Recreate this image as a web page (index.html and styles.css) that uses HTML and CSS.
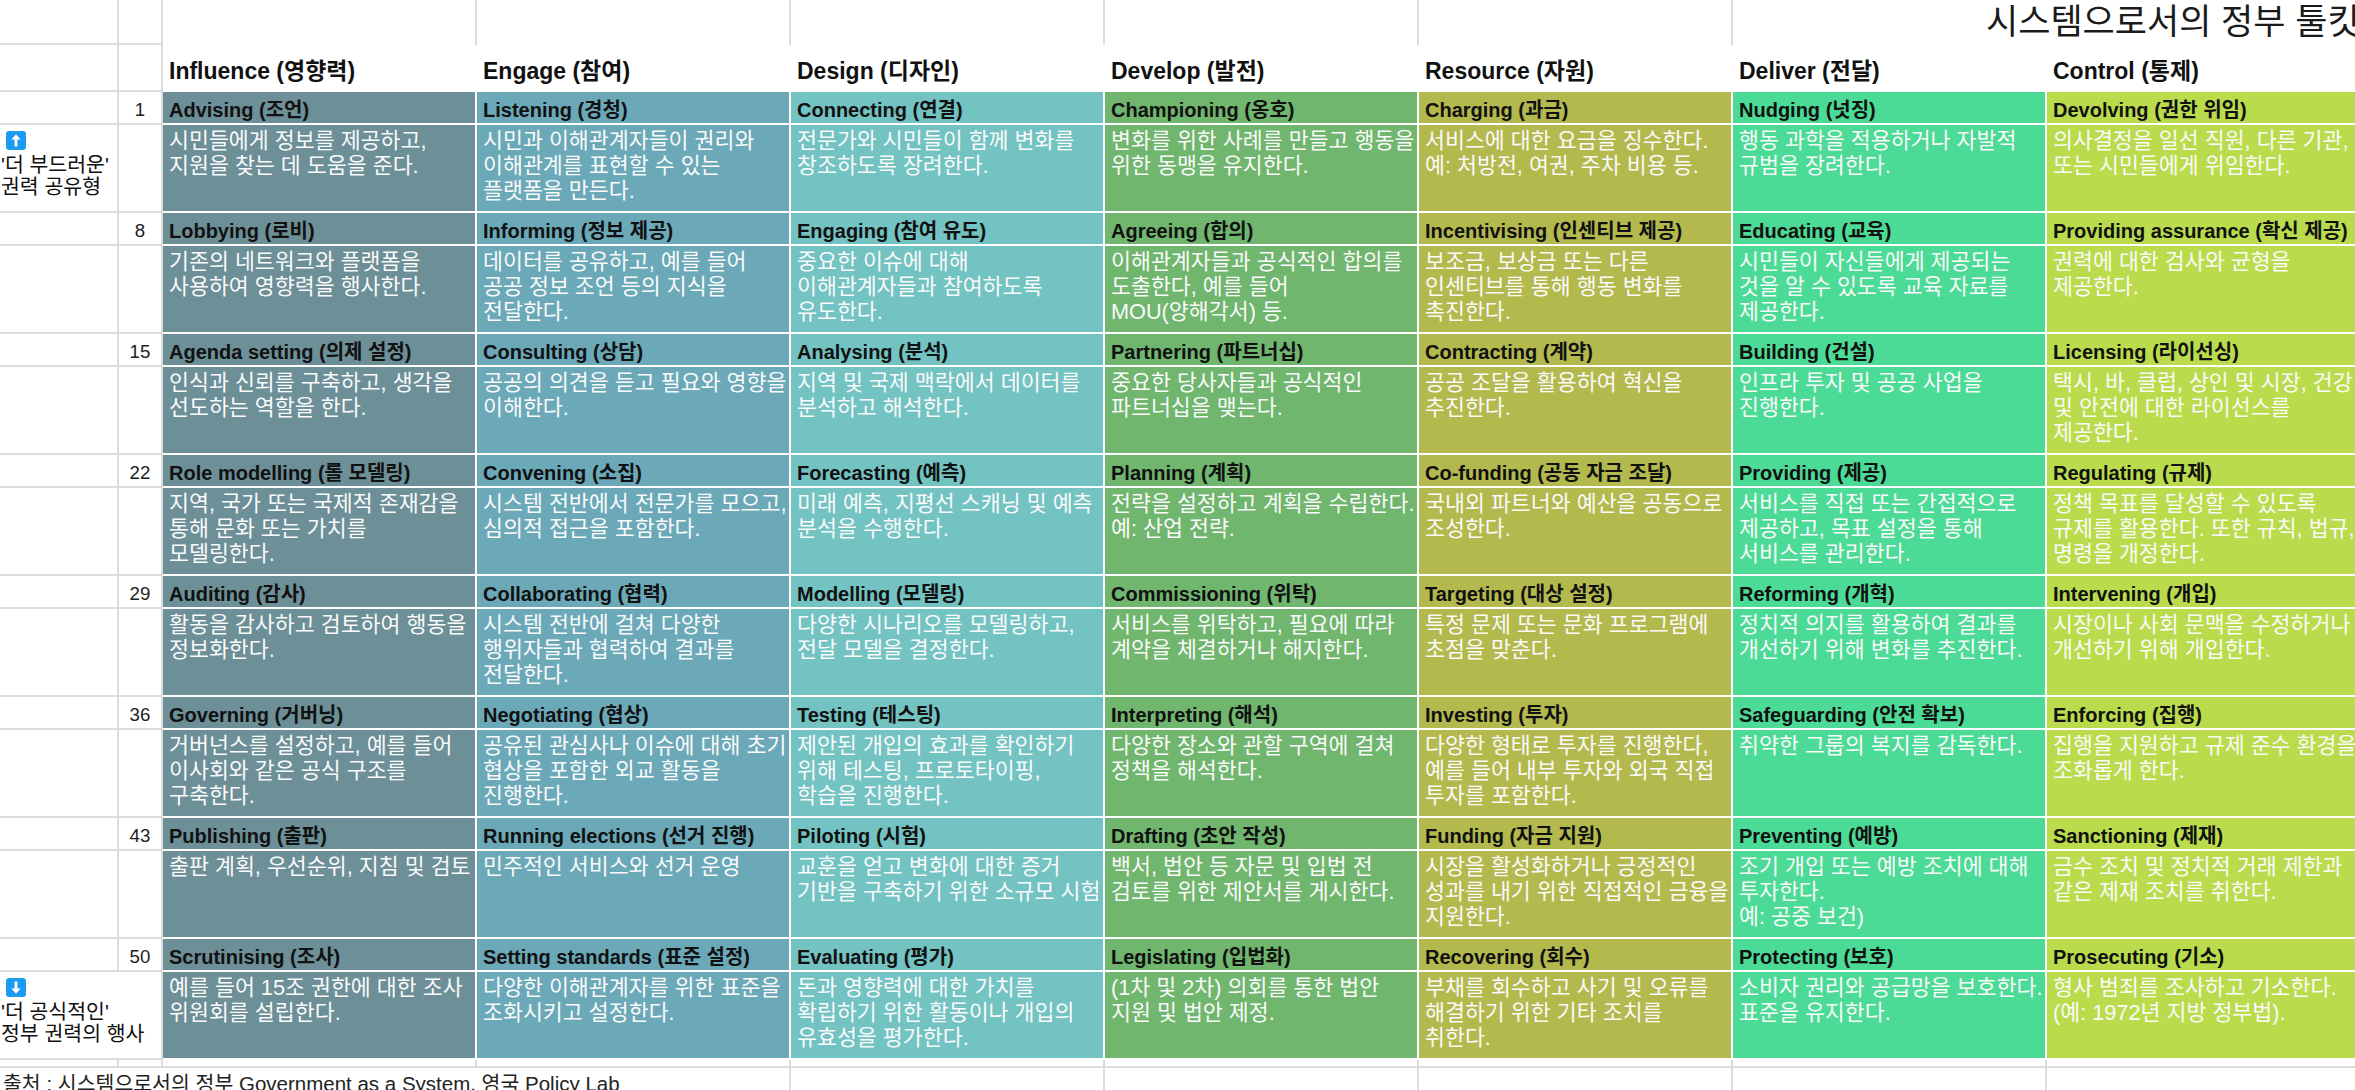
FILE: index.html
```html
<!DOCTYPE html>
<html lang="ko">
<head>
<meta charset="utf-8">
<title>시스템으로서의 정부 툴킷</title>
<link rel="stylesheet" href="styles.css">
</head>
<body>
<div class="sheet">
  <!-- top row -->
  <div class="g"></div>
  <div class="g"></div>
  <div class="top"></div>
  <div class="top"></div>
  <div class="top"></div>
  <div class="top"></div>
  <div class="top"></div>
  <div class="doc-title">시스템으로서의 정부 툴킷</div>

  <!-- header row -->
  <div class="g"></div>
  <div class="g"></div>
  <div class="hd">Influence (영향력)</div>
  <div class="hd">Engage (참여)</div>
  <div class="hd">Design (디자인)</div>
  <div class="hd">Develop (발전)</div>
  <div class="hd">Resource (자원)</div>
  <div class="hd">Deliver (전달)</div>
  <div class="hd">Control (통제)</div>

  <!-- 1 -->
  <div class="g"></div>
  <div class="g num">1</div>
  <div class="tt c1">Advising (조언)</div>
  <div class="tt c2">Listening (경청)</div>
  <div class="tt c3">Connecting (연결)</div>
  <div class="tt c4">Championing (옹호)</div>
  <div class="tt c5">Charging (과금)</div>
  <div class="tt c6">Nudging (넛징)</div>
  <div class="tt c7">Devolving (권한 위임)</div>
  <div class="g lab">
    <svg class="ico" width="20" height="19" viewBox="0 0 20 19"><rect width="20" height="19" rx="3" fill="#1c9cf1"/><path d="M10 3.2 L14.6 8.6 H11.4 V15.6 H8.6 V8.6 H5.4 Z" fill="#fff"/></svg>
    <span>'더 부드러운'</span>
    <span>권력 공유형</span>
  </div>
  <div class="g"></div>
  <div class="ds c1">시민들에게 정보를 제공하고,<br>지원을 찾는 데 도움을 준다.</div>
  <div class="ds c2">시민과 이해관계자들이 권리와<br>이해관계를 표현할 수 있는<br>플랫폼을 만든다.</div>
  <div class="ds c3">전문가와 시민들이 함께 변화를<br>창조하도록 장려한다.</div>
  <div class="ds c4">변화를 위한 사례를 만들고 행동을<br>위한 동맹을 유지한다.</div>
  <div class="ds c5">서비스에 대한 요금을 징수한다.<br>예: 처방전, 여권, 주차 비용 등.</div>
  <div class="ds c6">행동 과학을 적용하거나 자발적<br>규범을 장려한다.</div>
  <div class="ds c7">의사결정을 일선 직원, 다른 기관,<br>또는 시민들에게 위임한다.</div>

  <!-- 8 -->
  <div class="g"></div>
  <div class="g num">8</div>
  <div class="tt c1">Lobbying (로비)</div>
  <div class="tt c2">Informing (정보 제공)</div>
  <div class="tt c3">Engaging (참여 유도)</div>
  <div class="tt c4">Agreeing (합의)</div>
  <div class="tt c5">Incentivising (인센티브 제공)</div>
  <div class="tt c6">Educating (교육)</div>
  <div class="tt c7">Providing assurance (확신 제공)</div>
  <div class="g"></div>
  <div class="g"></div>
  <div class="ds c1">기존의 네트워크와 플랫폼을<br>사용하여 영향력을 행사한다.</div>
  <div class="ds c2">데이터를 공유하고, 예를 들어<br>공공 정보 조언 등의 지식을<br>전달한다.</div>
  <div class="ds c3">중요한 이슈에 대해<br>이해관계자들과 참여하도록<br>유도한다.</div>
  <div class="ds c4">이해관계자들과 공식적인 합의를<br>도출한다, 예를 들어<br>MOU(양해각서) 등.</div>
  <div class="ds c5">보조금, 보상금 또는 다른<br>인센티브를 통해 행동 변화를<br>촉진한다.</div>
  <div class="ds c6">시민들이 자신들에게 제공되는<br>것을 알 수 있도록 교육 자료를<br>제공한다.</div>
  <div class="ds c7">권력에 대한 검사와 균형을<br>제공한다.</div>

  <!-- 15 -->
  <div class="g"></div>
  <div class="g num">15</div>
  <div class="tt c1">Agenda setting (의제 설정)</div>
  <div class="tt c2">Consulting (상담)</div>
  <div class="tt c3">Analysing (분석)</div>
  <div class="tt c4">Partnering (파트너십)</div>
  <div class="tt c5">Contracting (계약)</div>
  <div class="tt c6">Building (건설)</div>
  <div class="tt c7">Licensing (라이선싱)</div>
  <div class="g"></div>
  <div class="g"></div>
  <div class="ds c1">인식과 신뢰를 구축하고, 생각을<br>선도하는 역할을 한다.</div>
  <div class="ds c2">공공의 의견을 듣고 필요와 영향을<br>이해한다.</div>
  <div class="ds c3">지역 및 국제 맥락에서 데이터를<br>분석하고 해석한다.</div>
  <div class="ds c4">중요한 당사자들과 공식적인<br>파트너십을 맺는다.</div>
  <div class="ds c5">공공 조달을 활용하여 혁신을<br>추진한다.</div>
  <div class="ds c6">인프라 투자 및 공공 사업을<br>진행한다.</div>
  <div class="ds c7">택시, 바, 클럽, 상인 및 시장, 건강<br>및 안전에 대한 라이선스를<br>제공한다.</div>

  <!-- 22 -->
  <div class="g"></div>
  <div class="g num">22</div>
  <div class="tt c1">Role modelling (롤 모델링)</div>
  <div class="tt c2">Convening (소집)</div>
  <div class="tt c3">Forecasting (예측)</div>
  <div class="tt c4">Planning (계획)</div>
  <div class="tt c5">Co-funding (공동 자금 조달)</div>
  <div class="tt c6">Providing (제공)</div>
  <div class="tt c7">Regulating (규제)</div>
  <div class="g"></div>
  <div class="g"></div>
  <div class="ds c1">지역, 국가 또는 국제적 존재감을<br>통해 문화 또는 가치를<br>모델링한다.</div>
  <div class="ds c2">시스템 전반에서 전문가를 모으고,<br>심의적 접근을 포함한다.</div>
  <div class="ds c3">미래 예측, 지평선 스캐닝 및 예측<br>분석을 수행한다.</div>
  <div class="ds c4">전략을 설정하고 계획을 수립한다.<br>예: 산업 전략.</div>
  <div class="ds c5">국내외 파트너와 예산을 공동으로<br>조성한다.</div>
  <div class="ds c6">서비스를 직접 또는 간접적으로<br>제공하고, 목표 설정을 통해<br>서비스를 관리한다.</div>
  <div class="ds c7">정책 목표를 달성할 수 있도록<br>규제를 활용한다. 또한 규칙, 법규,<br>명령을 개정한다.</div>

  <!-- 29 -->
  <div class="g"></div>
  <div class="g num">29</div>
  <div class="tt c1">Auditing (감사)</div>
  <div class="tt c2">Collaborating (협력)</div>
  <div class="tt c3">Modelling (모델링)</div>
  <div class="tt c4">Commissioning (위탁)</div>
  <div class="tt c5">Targeting (대상 설정)</div>
  <div class="tt c6">Reforming (개혁)</div>
  <div class="tt c7">Intervening (개입)</div>
  <div class="g"></div>
  <div class="g"></div>
  <div class="ds c1">활동을 감사하고 검토하여 행동을<br>정보화한다.</div>
  <div class="ds c2">시스템 전반에 걸쳐 다양한<br>행위자들과 협력하여 결과를<br>전달한다.</div>
  <div class="ds c3">다양한 시나리오를 모델링하고,<br>전달 모델을 결정한다.</div>
  <div class="ds c4">서비스를 위탁하고, 필요에 따라<br>계약을 체결하거나 해지한다.</div>
  <div class="ds c5">특정 문제 또는 문화 프로그램에<br>초점을 맞춘다.</div>
  <div class="ds c6">정치적 의지를 활용하여 결과를<br>개선하기 위해 변화를 추진한다.</div>
  <div class="ds c7">시장이나 사회 문맥을 수정하거나<br>개선하기 위해 개입한다.</div>

  <!-- 36 -->
  <div class="g"></div>
  <div class="g num">36</div>
  <div class="tt c1">Governing (거버닝)</div>
  <div class="tt c2">Negotiating (협상)</div>
  <div class="tt c3">Testing (테스팅)</div>
  <div class="tt c4">Interpreting (해석)</div>
  <div class="tt c5">Investing (투자)</div>
  <div class="tt c6">Safeguarding (안전 확보)</div>
  <div class="tt c7">Enforcing (집행)</div>
  <div class="g"></div>
  <div class="g"></div>
  <div class="ds c1">거버넌스를 설정하고, 예를 들어<br>이사회와 같은 공식 구조를<br>구축한다.</div>
  <div class="ds c2">공유된 관심사나 이슈에 대해 초기<br>협상을 포함한 외교 활동을<br>진행한다.</div>
  <div class="ds c3">제안된 개입의 효과를 확인하기<br>위해 테스팅, 프로토타이핑,<br>학습을 진행한다.</div>
  <div class="ds c4">다양한 장소와 관할 구역에 걸쳐<br>정책을 해석한다.</div>
  <div class="ds c5">다양한 형태로 투자를 진행한다,<br>예를 들어 내부 투자와 외국 직접<br>투자를 포함한다.</div>
  <div class="ds c6">취약한 그룹의 복지를 감독한다.</div>
  <div class="ds c7">집행을 지원하고 규제 준수 환경을<br>조화롭게 한다.</div>

  <!-- 43 -->
  <div class="g"></div>
  <div class="g num">43</div>
  <div class="tt c1">Publishing (출판)</div>
  <div class="tt c2">Running elections (선거 진행)</div>
  <div class="tt c3">Piloting (시험)</div>
  <div class="tt c4">Drafting (초안 작성)</div>
  <div class="tt c5">Funding (자금 지원)</div>
  <div class="tt c6">Preventing (예방)</div>
  <div class="tt c7">Sanctioning (제재)</div>
  <div class="g"></div>
  <div class="g"></div>
  <div class="ds c1">출판 계획, 우선순위, 지침 및 검토</div>
  <div class="ds c2">민주적인 서비스와 선거 운영</div>
  <div class="ds c3">교훈을 얻고 변화에 대한 증거<br>기반을 구축하기 위한 소규모 시험</div>
  <div class="ds c4">백서, 법안 등 자문 및 입법 전<br>검토를 위한 제안서를 게시한다.</div>
  <div class="ds c5">시장을 활성화하거나 긍정적인<br>성과를 내기 위한 직접적인 금융을<br>지원한다.</div>
  <div class="ds c6">조기 개입 또는 예방 조치에 대해<br>투자한다.<br>예: 공중 보건)</div>
  <div class="ds c7">금수 조치 및 정치적 거래 제한과<br>같은 제재 조치를 취한다.</div>

  <!-- 50 -->
  <div class="g"></div>
  <div class="g num">50</div>
  <div class="tt c1">Scrutinising (조사)</div>
  <div class="tt c2">Setting standards (표준 설정)</div>
  <div class="tt c3">Evaluating (평가)</div>
  <div class="tt c4">Legislating (입법화)</div>
  <div class="tt c5">Recovering (회수)</div>
  <div class="tt c6">Protecting (보호)</div>
  <div class="tt c7">Prosecuting (기소)</div>
  <div class="g lab span2">
    <svg class="ico" width="20" height="19" viewBox="0 0 20 19"><rect width="20" height="19" rx="3" fill="#1c9cf1"/><path d="M10 15.8 L14.6 10.4 H11.4 V3.4 H8.6 V10.4 H5.4 Z" fill="#fff"/></svg>
    <span>'더 공식적인'</span>
    <span>정부 권력의 행사</span>
  </div>
  <div class="ds c1">예를 들어 15조 권한에 대한 조사<br>위원회를 설립한다.</div>
  <div class="ds c2">다양한 이해관계자를 위한 표준을<br>조화시키고 설정한다.</div>
  <div class="ds c3">돈과 영향력에 대한 가치를<br>확립하기 위한 활동이나 개입의<br>유효성을 평가한다.</div>
  <div class="ds c4">(1차 및 2차) 의회를 통한 법안<br>지원 및 법안 제정.</div>
  <div class="ds c5">부채를 회수하고 사기 및 오류를<br>해결하기 위한 기타 조치를<br>취한다.</div>
  <div class="ds c6">소비자 권리와 공급망을 보호한다.<br>표준을 유지한다.</div>
  <div class="ds c7">형사 범죄를 조사하고 기소한다.<br>(예: 1972년 지방 정부법).</div>

  <!-- spacer row -->
  <div class="g"></div>
  <div class="g"></div>
  <div class="g"></div>
  <div class="g"></div>
  <div class="g"></div>
  <div class="g"></div>
  <div class="g"></div>
  <div class="g"></div>
  <div class="g"></div>

  <!-- footer row -->
  <div class="g source">출처 : 시스템으로서의 정부 Government as a System, 영국 Policy Lab</div>
  <div class="g"></div>
  <div class="g"></div>
  <div class="g"></div>
  <div class="g"></div>
  <div class="g"></div>
</div>
</body>
</html>
```

FILE: styles.css
```css
html, body {
  margin: 0;
  padding: 0;
}

body {
  width: 2355px;
  height: 1090px;
  overflow: hidden;
  background: #ffffff;
  font-family: "Liberation Sans", "Noto Sans CJK KR", sans-serif;
  color: #000000;
}

.sheet {
  display: grid;
  grid-template-columns: 119px 44px repeat(7, 314px);
  grid-template-rows: 45px 47px repeat(8, 33px 88px) 8px 34px;
  width: 2361px;
}

.sheet > div {
  box-sizing: border-box;
  min-width: 0;
  overflow: hidden;
  white-space: nowrap;
}

/* spreadsheet gridlines */
.g {
  border-right: 2px solid #dcdcdc;
  border-bottom: 2px solid #dcdcdc;
}

.top {
  border-right: 2px solid #dcdcdc;
}

.doc-title {
  grid-column: span 2;
  padding-left: 253px;
  font-size: 35px;
  line-height: 43px;
  color: #1a1a1a;
}

/* column headers */
.hd {
  display: flex;
  align-items: flex-end;
  padding: 0 0 6px 6px;
  font-size: 23px;
  line-height: 30px;
  font-weight: 700;
  color: #111111;
}

/* row numbers */
.num {
  text-align: center;
  padding-top: 6px;
  font-size: 18.67px;
  line-height: 24px;
  color: #222222;
}

/* coloured tool cells */
.tt,
.ds {
  border-right: 2px solid #ffffff;
  border-bottom: 2px solid #ffffff;
  padding-left: 6px;
  padding-right: 2px;
}

.tt {
  padding-top: 6px;
  font-size: 20px;
  line-height: 24px;
  font-weight: 700;
  color: #111111;
}

.ds {
  padding-top: 3px;
  font-size: 21.7px;
  line-height: 25px;
  color: #fafafa;
}

.c1 { background: #6c8f98; }
.c2 { background: #6ba9b9; }
.c3 { background: #73c3c3; }
.c4 { background: #70b66e; }
.c5 { background: #b4b94e; }
.c6 { background: #4cdb96; }
.c7 { background: #badc4c; }

/* side labels */
.lab {
  display: flex;
  flex-direction: column;
  align-items: flex-start;
  padding: 6px 0 0 1px;
  font-size: 20.5px;
  line-height: 22px;
  color: #111111;
}

.sheet > .lab {
  overflow: visible;
}

.lab .ico {
  display: block;
  margin: 0 0 4px 5px;
}

.span2 {
  grid-column: span 2;
}

/* footer source note */
.source {
  grid-column: span 4;
  padding: 4px 0 0 3px;
  font-size: 20.5px;
  line-height: 24px;
  color: #222222;
}
```
